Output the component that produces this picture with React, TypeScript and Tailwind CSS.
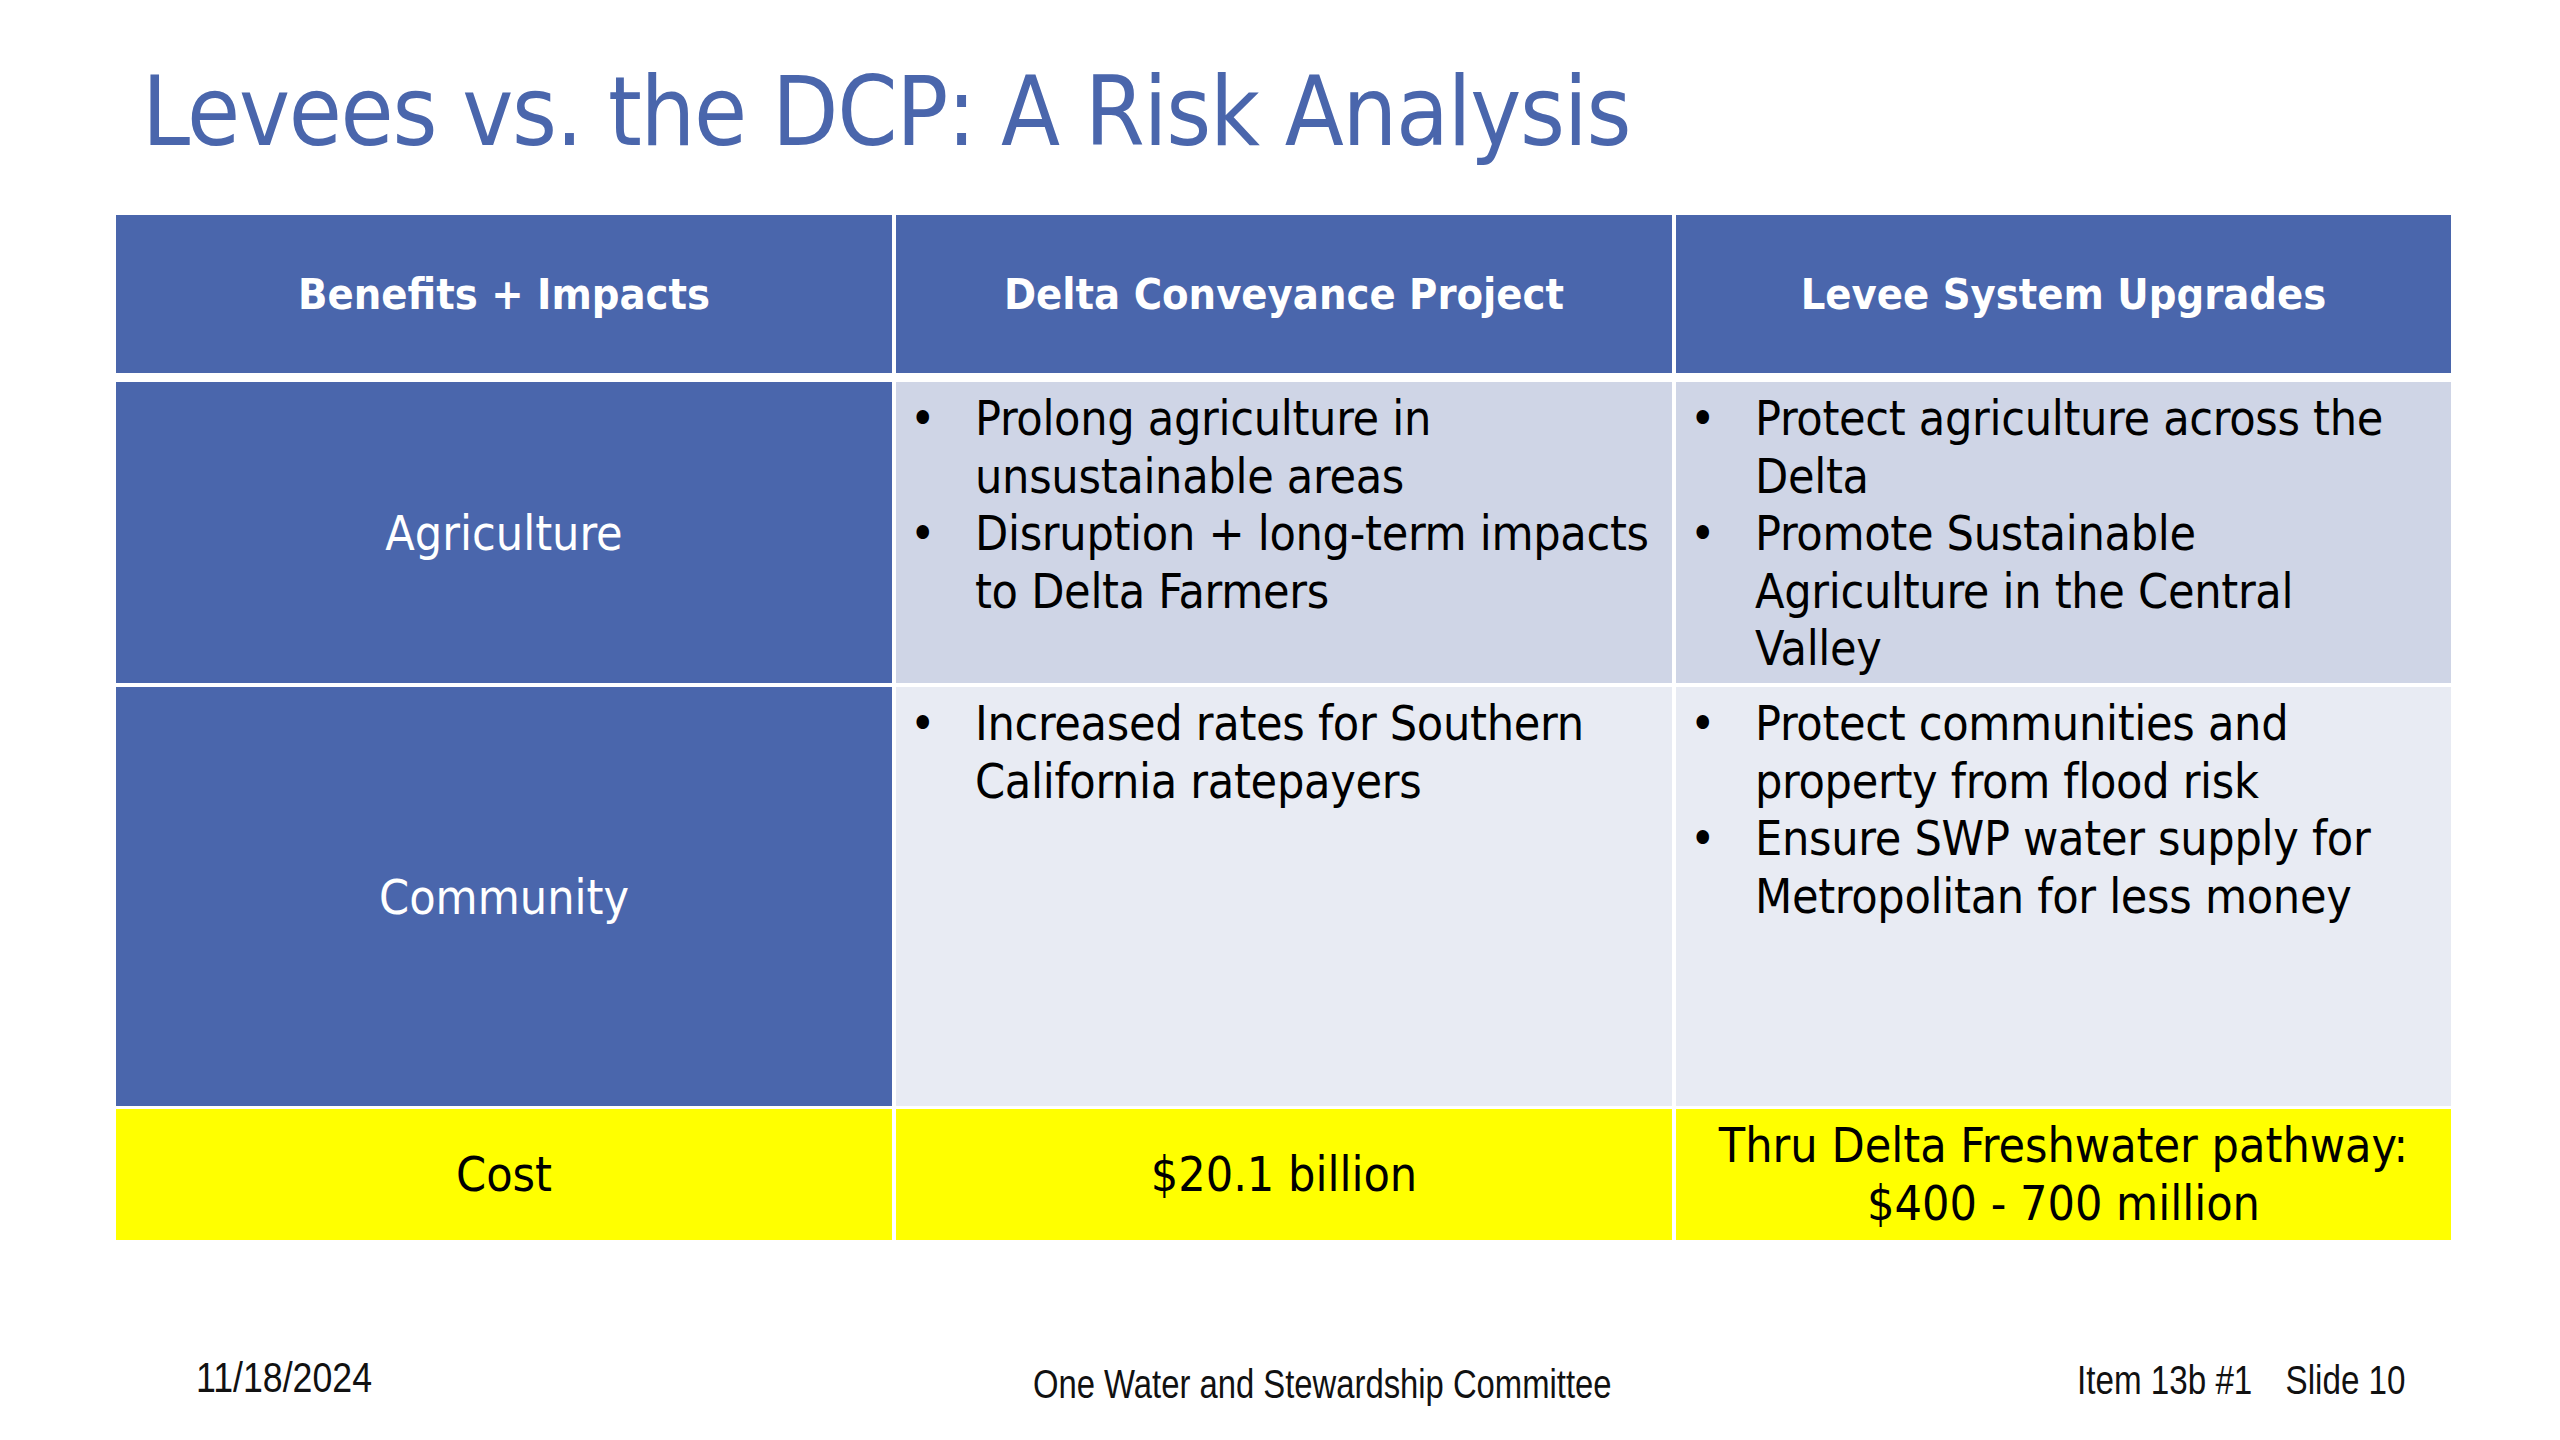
import React from "react";

const BODY = "font-['DejaVu_Sans_Condensed','DejaVu_Sans',sans-serif] [font-stretch:semi-condensed]";

function Bullets({ items }: { items: string[][] }) {
  return (
    <div className="flex flex-col text-[48px] leading-[57.6px] text-black">
      {items.map((lines, i) => (
        <div key={i} className="flex">
          <span className="w-[79px] shrink-0 pl-[14px]">•</span>
          <span className="whitespace-nowrap tracking-[-0.3px]">
            {lines.map((l, j) => (
              <React.Fragment key={j}>
                {j > 0 && <br />}
                {l}
              </React.Fragment>
            ))}
          </span>
        </div>
      ))}
    </div>
  );
}

export default function App() {
  return (
    <div className={`w-[2560px] h-[1440px] bg-white overflow-hidden flex flex-col ${BODY}`}>
      <h1 className="pl-[142px] pt-[62px] text-[96px] leading-[100px] tracking-[-1.3px] text-[#4A66AC] font-normal whitespace-nowrap">
        Levees vs. the DCP: A Risk Analysis
      </h1>

      <div className="mt-[53px] ml-[116px] w-[2335px] flex flex-col">
        {/* Header */}
        <div className="grid grid-cols-[776px_776px_775px] gap-x-[4px] h-[158px]">
          {["Benefits + Impacts", "Delta Conveyance Project", "Levee System Upgrades"].map((t) => (
            <div key={t} className="bg-[#4A66AC] flex items-center justify-center text-white font-bold text-[43px] leading-none">
              {t}
            </div>
          ))}
        </div>

        {/* Agriculture */}
        <div className="mt-[9px] grid grid-cols-[776px_776px_775px] gap-x-[4px] h-[301px]">
          <div className="bg-[#4A66AC] flex items-center justify-center text-white text-[48px]">Agriculture</div>
          <div className="bg-[#CFD5E6] pt-[8px]">
            <Bullets
              items={[
                ["Prolong agriculture in", "unsustainable areas"],
                ["Disruption + long-term impacts", "to Delta Farmers"],
              ]}
            />
          </div>
          <div className="bg-[#CFD5E6] pt-[8px]">
            <Bullets
              items={[
                ["Protect agriculture across the", "Delta"],
                ["Promote Sustainable", "Agriculture in the Central", "Valley"],
              ]}
            />
          </div>
        </div>

        {/* Community */}
        <div className="mt-[4px] grid grid-cols-[776px_776px_775px] gap-x-[4px] h-[419px]">
          <div className="bg-[#4A66AC] flex items-center justify-center text-white text-[48px]">Community</div>
          <div className="bg-[#E8EBF3] pt-[8px]">
            <Bullets items={[["Increased rates for Southern", "California ratepayers"]]} />
          </div>
          <div className="bg-[#E8EBF3] pt-[8px]">
            <Bullets
              items={[
                ["Protect communities and", "property from flood risk"],
                ["Ensure SWP water supply for", "Metropolitan for less money"],
              ]}
            />
          </div>
        </div>

        {/* Cost */}
        <div className="mt-[3px] grid grid-cols-[776px_776px_775px] gap-x-[4px] h-[131px] text-black text-[48px] leading-[57.6px]">
          <div className="bg-[#FFFF00] flex items-center justify-center">Cost</div>
          <div className="bg-[#FFFF00] flex items-center justify-center">$20.1 billion</div>
          <div className="bg-[#FFFF00] flex flex-col items-center justify-center text-center">
            <span>Thru Delta Freshwater pathway:</span>
            <span>$400 - 700 million</span>
          </div>
        </div>
      </div>

      {/* Footer */}
      <div className="mt-[117px] flex items-start text-[#111] font-['Liberation_Sans',sans-serif] leading-none">
        <div className="ml-[196px] w-[837px]">
          <span className="inline-block origin-left scale-x-[0.85] text-[42px] whitespace-nowrap">11/18/2024</span>
        </div>
        <div className="w-[1044px] mt-[7px]">
          <span className="inline-block origin-left scale-x-[0.82] text-[40px] whitespace-nowrap">One Water and Stewardship Committee</span>
        </div>
        <div className="mt-[3px]">
          <span className="flex origin-left scale-x-[0.83] text-[40px] whitespace-nowrap">
            <span>Item 13b #1</span>
            <span className="ml-[40px]">Slide 10</span>
          </span>
        </div>
      </div>
    </div>
  );
}
